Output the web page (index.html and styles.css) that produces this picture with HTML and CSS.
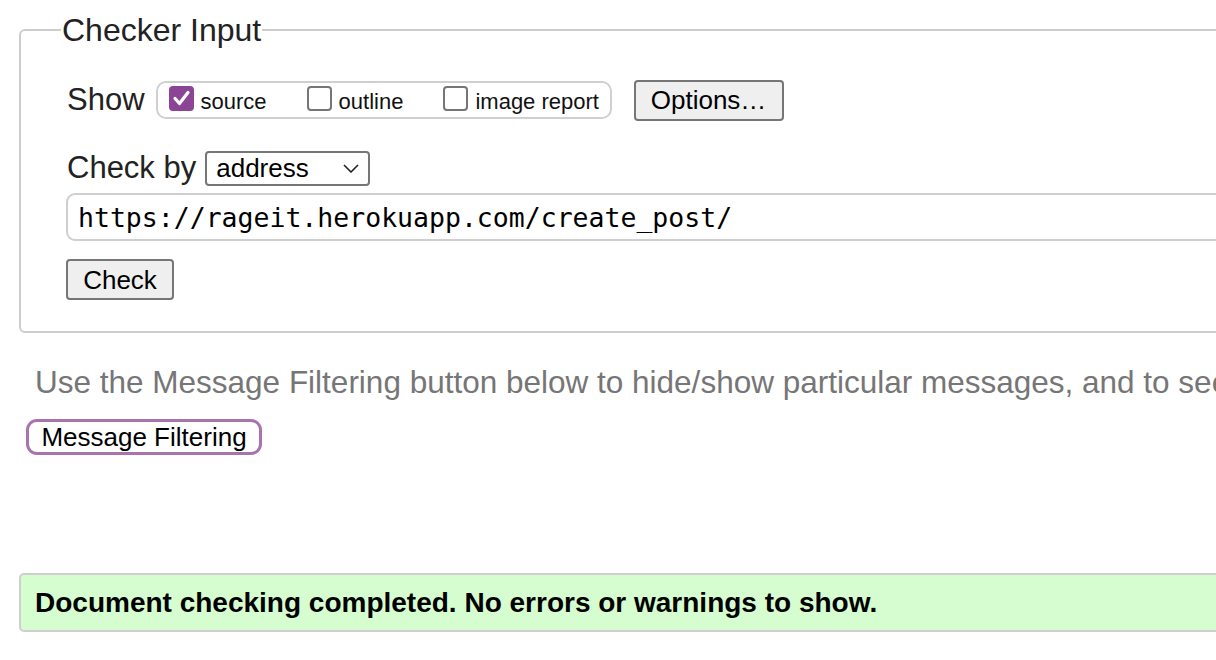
FILE: index.html
```html
<!DOCTYPE html>
<html lang="en">
<head>
<meta charset="utf-8">
<title>Checker</title>
<link rel="stylesheet" href="styles.css">
</head>
<body>
<div class="page">
  <fieldset class="checker">
    <legend class="legend">Checker Input</legend>
    <div class="row row-show">
      <span class="label">Show</span>
      <div class="show-group">
        <span class="opt">
          <span class="cb cb-on"><svg viewBox="0 0 25 25" width="25" height="25"><path d="M6 12.5 L10.5 17.5 L19 6.5" fill="none" stroke="#fff" stroke-width="3.2" stroke-linecap="round" stroke-linejoin="round"/></svg></span>
          <span class="opt-text">source</span>
        </span>
        <span class="opt">
          <span class="cb"></span>
          <span class="opt-text">outline</span>
        </span>
        <span class="opt">
          <span class="cb"></span>
          <span class="opt-text">image report</span>
        </span>
      </div>
      <button class="btn btn-options">Options…</button>
    </div>
    <div class="row row-by">
      <span class="label">Check by</span>
      <div class="select">
        <span class="select-text">address</span>
        <svg class="chev" viewBox="0 0 16 9" width="16" height="9"><path d="M1 1 L8 8 L15 1" fill="none" stroke="#222" stroke-width="1.6"/></svg>
      </div>
    </div>
    <div class="url">https://rageit.herokuapp.com/create_post/</div>
    <div class="row row-check">
      <button class="btn btn-check">Check</button>
    </div>
  </fieldset>

  <p class="hint">Use the Message Filtering button below to hide/show particular messages, and to see</p>
  <button class="filter-btn">Message Filtering</button>

  <div class="success">Document checking completed. No errors or warnings to show.</div>
</div>
</body>
</html>
```

FILE: styles.css
```css
html, body {
  margin: 0;
  padding: 0;
  overflow: hidden;
  background: #fff;
}
body {
  font-family: "Liberation Sans", Arial, sans-serif;
  color: #1d1d1f;
  width: 1216px;
  height: 660px;
}
.page {
  width: 1500px;
  padding: 12px 0 0 19px;
  display: flex;
  flex-direction: column;
  align-items: flex-start;
}
.checker {
  box-sizing: border-box;
  width: 1400px;
  margin: 0;
  border: 2px solid #cdcdcd;
  border-radius: 6px;
  padding: 31px 0 31px 46px;
}
.legend {
  font-size: 32px;
  line-height: 36px;
  padding: 0 1px;
  margin-left: -6px;
  color: #222;
}
.row {
  display: flex;
  align-items: center;
}
.label {
  font-size: 31px;
  color: #222;
}
.row-show {
  height: 42px;
}
.show-group {
  box-sizing: border-box;
  margin-left: 11px;
  height: 38px;
  width: 456px;
  border: 2px solid #d0d0d0;
  border-radius: 10px;
  display: flex;
  align-items: center;
  padding-left: 11px;
  gap: 40px;
}
.opt {
  display: flex;
  align-items: center;
  gap: 7px;
}
.cb {
  box-sizing: border-box;
  width: 25px;
  height: 25px;
  border: 2px solid #767676;
  border-radius: 4px;
  background: #fff;
  display: block;
  margin-top: -4px;
}
.cb svg { display: block; }
.cb-on {
  border: none;
  background: #8c4596;
}
.opt-text {
  font-size: 22px;
  color: #111;
  margin-top: 3px;
}
.btn {
  box-sizing: border-box;
  font-family: "Liberation Sans", Arial, sans-serif;
  font-size: 26px;
  color: #000;
  background: #efefef;
  border: 2px solid #767676;
  border-radius: 4px;
  padding: 0;
  height: 41px;
  line-height: 36px;
}
.btn-options {
  margin-left: 22px;
  width: 150px;
}
.row-by {
  margin-top: 29px;
  height: 36px;
}
.select {
  box-sizing: border-box;
  margin-left: 9px;
  width: 165px;
  height: 35px;
  border: 2px solid #767676;
  border-radius: 4px;
  display: flex;
  align-items: center;
  padding: 0 9px;
  justify-content: space-between;
}
.select-text {
  font-size: 26px;
  color: #000;
}
.chev { display: block; }
.url {
  box-sizing: border-box;
  margin-top: 7px;
  height: 48px;
  width: 1400px;
  border: 2px solid #cfcfcf;
  border-radius: 9px;
  font-family: "DejaVu Sans Mono", monospace;
  font-size: 26.5px;
  line-height: 46px;
  padding-left: 10px;
  color: #000;
  margin-left: -1px;
}
.row-check {
  margin-top: 18px;
}
.btn-check {
  width: 108px;
  margin-left: -1px;
}
.hint {
  margin: 31px 0 0 16px;
  font-size: 31.5px;
  line-height: 36px;
  color: #767676;
  white-space: nowrap;
}
.filter-btn {
  box-sizing: border-box;
  margin: 19px 0 0 7px;
  height: 36px;
  width: 236px;
  border: 3px solid #a974ad;
  border-radius: 11px;
  background: #fff;
  font-family: "Liberation Sans", Arial, sans-serif;
  font-size: 26px;
  color: #000;
  padding: 0;
  line-height: 30px;
}
.success {
  box-sizing: border-box;
  margin-top: 118px;
  width: 1400px;
  height: 59px;
  background: #d6fdd0;
  border: 2px solid #cfcfcf;
  border-radius: 5px;
  font-weight: bold;
  font-size: 28px;
  line-height: 55px;
  padding-left: 14px;
  color: #000;
}
```
